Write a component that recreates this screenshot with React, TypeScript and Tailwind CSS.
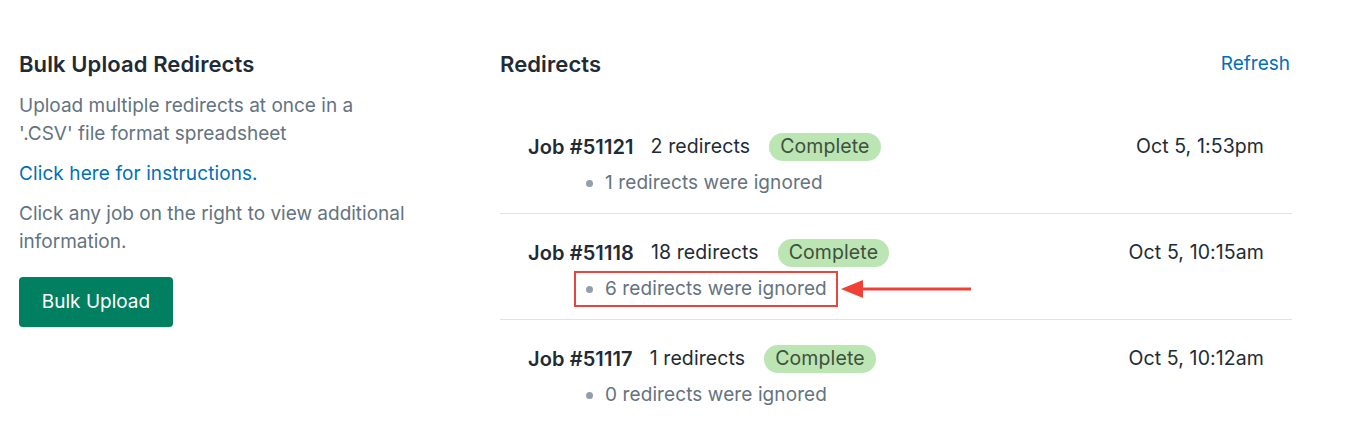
import React from "react";

const jobs = [
  { id: "51121", count: "2 redirects", ignored: "1 redirects were ignored", date: "Oct 5, 1:53pm", highlight: false },
  { id: "51118", count: "18 redirects", ignored: "6 redirects were ignored", date: "Oct 5, 10:15am", highlight: true },
  { id: "51117", count: "1 redirects", ignored: "0 redirects were ignored", date: "Oct 5, 10:12am", highlight: false },
];

export default function App() {
  return (
    <div
      className="w-[1366px] h-[422px] bg-white flex text-[#212b36] overflow-hidden"
      style={{ fontFamily: "Inter, 'Noto Sans', sans-serif" }}
    >
      <div className="w-[500px] pl-[19px] pt-[50px] shrink-0">
        <h2 className="text-[22px] leading-[28px] font-semibold tracking-[0.1px]">Bulk Upload Redirects</h2>
        <div className="w-[440px]">
          <p className="mt-[14px] text-[19px] leading-[28px] text-[#637381]">
            Upload multiple redirects at once in a
            <br />
            '.CSV' file format spreadsheet
          </p>
          <a className="block mt-[12px] text-[19px] leading-[28px] tracking-[0.1px] text-[#006fbb]">
            Click here for instructions.
          </a>
          <p className="mt-[12px] text-[19px] leading-[28px] text-[#637381]">
            Click any job on the right to view additional
            <br />
            information.
          </p>
        </div>
        <button className="mt-[21px] h-[50px] w-[154px] rounded-[4px] bg-[#008060] text-white text-[19px] shadow-[0_1px_0_rgba(0,0,0,0.08)]">
          Bulk Upload
        </button>
      </div>
      <div className="w-[792px] pt-[50px] shrink-0">
        <div className="flex items-center justify-between h-[28px]">
          <h2 className="text-[22px] leading-[28px] font-semibold tracking-[0.1px]">Redirects</h2>
          <a className="text-[19px] leading-[28px] text-[#006fbb] mr-[2px]">Refresh</a>
        </div>
        <div className="mt-[30px]">
          {jobs.map((j, i) => (
            <div
              key={j.id}
              className={`px-[28px] pt-[25px] pb-[16px] ${i < jobs.length - 1 ? "border-b border-[#dfe3e8]" : ""}`}
            >
              <div className="flex items-center justify-between h-[28px] text-[19.5px] tracking-[0.1px]">
                <div className="flex items-center">
                  <span className="font-semibold text-[20px]">Job #{j.id}</span>
                  <span className="ml-[17px]">{j.count}</span>
                  <span className="ml-[19px] h-[28px] px-[11px] rounded-full bg-[#bbe5b3] text-[#414f3e] flex items-center">
                    Complete
                  </span>
                </div>
                <span>{j.date}</span>
              </div>
              <div className="mt-[8px] ml-[58px] relative inline-flex items-center h-[28px] text-[19px] tracking-[0.1px] text-[#637381]">
                <span className="w-[7px] h-[7px] rounded-full bg-[#919eab] mr-[12px]"></span>
                <span>{j.ignored}</span>
                {j.highlight && (
                  <>
                    <span className="absolute left-[-12px] right-[-11px] top-[-4px] bottom-[-4px] border-2 border-[#e8453c]"></span>
                    <svg
                      className="absolute left-[calc(100%+14px)] top-[4px]"
                      width="130"
                      height="20"
                      viewBox="0 0 130 20"
                    >
                      <polygon points="0,10 22,1 22,19" fill="#ef4136" />
                      <rect x="20" y="8.5" width="110" height="3" fill="#ef4136" />
                    </svg>
                  </>
                )}
              </div>
            </div>
          ))}
        </div>
      </div>
    </div>
  );
}
